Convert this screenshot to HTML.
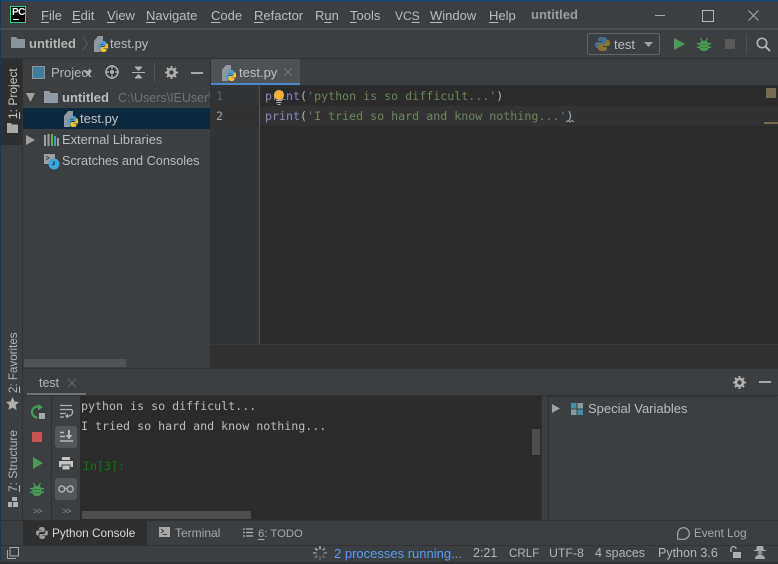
<!DOCTYPE html>
<html><head><meta charset="utf-8"><style>
html,body{margin:0;padding:0;background:#3c3f41}
#r{position:relative;width:778px;height:564px;overflow:hidden;background:#3c3f41;font-family:"Liberation Sans",sans-serif;font-size:13px;color:#bbbbbb}
.b{position:absolute}
.t{position:absolute;white-space:pre;line-height:16px}
.m{position:absolute;white-space:pre;font-family:"DejaVu Sans Mono",monospace;font-size:11.65px;line-height:16px}
svg{position:absolute;overflow:visible}
u{text-decoration:underline;text-underline-offset:2px}
.v{position:absolute;white-space:pre;transform-origin:0 0;transform:rotate(-90deg);line-height:14px;font-size:12px}
</style></head><body><div id="r">
<!-- edges -->
<div class="b" style="left:0;top:0;width:778px;height:1px;background:#0b4a8c"></div>
<div class="b" style="left:0;top:0;width:1px;height:564px;background:#16375a"></div>

<!-- title bar -->
<div class="b" style="left:10px;top:6px;width:16px;height:17px;background:#000;border:1px solid #21d789;box-sizing:border-box"></div>
<div class="t" style="left:12px;top:7px;font-size:10px;font-weight:bold;color:#fff;line-height:12px;letter-spacing:-.5px">PC</div>
<div class="b" style="left:13px;top:19px;width:6px;height:1px;background:#fff"></div>
<div class="t" style="left:41px;top:8px"><u>F</u>ile</div>
<div class="t" style="left:72px;top:8px"><u>E</u>dit</div>
<div class="t" style="left:107px;top:8px"><u>V</u>iew</div>
<div class="t" style="left:146px;top:8px"><u>N</u>avigate</div>
<div class="t" style="left:211px;top:8px"><u>C</u>ode</div>
<div class="t" style="left:254px;top:8px"><u>R</u>efactor</div>
<div class="t" style="left:315px;top:8px">R<u>u</u>n</div>
<div class="t" style="left:350px;top:8px"><u>T</u>ools</div>
<div class="t" style="left:395px;top:8px;font-size:12px">VC<u>S</u></div>
<div class="t" style="left:430px;top:8px"><u>W</u>indow</div>
<div class="t" style="left:489px;top:8px"><u>H</u>elp</div>
<div class="t" style="left:531px;top:7px;font-weight:bold;color:#9a9da0">untitled</div>
<div class="b" style="left:655px;top:15px;width:10px;height:1px;background:#a8a8a8"></div>
<div class="b" style="left:702px;top:10px;width:10px;height:10px;border:1px solid #b5b5b5"></div>
<svg style="left:748px;top:10px" width="11" height="11"><path d="M.5.5l10 10M10.500.5l-10 10" stroke="#a8a8a8" fill="none"/></svg>
<div class="b" style="left:0;top:28px;width:778px;height:2px;background:#4b4e50"></div>

<!-- nav bar -->
<svg style="left:11px;top:37px" width="14" height="11"><path d="M0 0h5l2 2h7v9H0z" fill="#8a9299"/></svg>
<div class="t" style="left:29px;top:36px;font-weight:bold;color:#b4b4b4">untitled</div>
<svg style="left:82px;top:36px" width="6" height="16"><path d="M.5.500l5 7-5 7" stroke="#5c5f61" fill="none"/></svg>
<svg style="left:94px;top:36px" width="14" height="16"><use href="#py"/></svg>
<div class="t" style="left:110px;top:36px">test.py</div>

<div class="b" style="left:587px;top:33px;width:73px;height:22px;border:1px solid #646464;border-radius:3px;box-sizing:border-box"></div>
<svg style="left:595px;top:36px" width="15" height="16"><path d="M7 1c-3 0-4 1-4 3v1h4v1H2C0 6 0 8 0 9c0 2 1 3 2 3h2v-2c0-1 1-2 3-2h3c1 0 2-1 2-2V3c0-1-2-2-5-2z" fill="#3f6f93"/><path d="M8 15c3 0 4-1 4-3v-1H8v-1h5c2 0 2-2 2-3 0-2-1-3-2-3h-2v2c0 1-1 2-3 2H5c-1 0-2 1-2 2v3c0 1 2 2 5 2z" fill="#8a7530"/></svg>
<div class="t" style="left:614px;top:37px">test</div>
<svg style="left:644px;top:42px" width="9" height="5"><path d="M0 0h9L4.500 5z" fill="#a0a0a0"/></svg>
<svg style="left:674px;top:38px" width="11" height="12"><path d="M0 0l11 6-11 6z" fill="#499c54"/></svg>
<svg style="left:697px;top:37px" width="14" height="14"><use href="#bug"/></svg>
<div class="b" style="left:725px;top:39px;width:10px;height:10px;background:#5a5a5a"></div>
<div class="b" style="left:746px;top:34px;width:1px;height:20px;background:#4f5254"></div>
<svg style="left:756px;top:37px" width="15" height="15"><circle cx="6" cy="6" r="4.700" fill="none" stroke="#b0b0b0" stroke-width="1.700"/><path d="M9.500 9.500l4.500 4.500" stroke="#b0b0b0" stroke-width="2"/></svg>
<div class="b" style="left:0;top:58px;width:778px;height:1px;background:#323232"></div>

<!-- left strip -->
<div class="b" style="left:1px;top:59px;width:21px;height:86px;background:#2c2e30"></div>
<div class="b" style="left:22px;top:59px;width:1px;height:461px;background:#323232"></div>
<div class="v" style="left:6px;top:119px;color:#c8c8c8"><u>1</u>: Project</div>
<svg style="left:7px;top:123px" width="11" height="10"><path d="M0 0h4l1 1.500h6V10H0z" fill="#a9a9a9"/></svg>
<div class="v" style="left:7px;top:393px;color:#b4b4b4;font-size:11.600px"><u>2</u>: Favorites</div>
<svg style="left:6px;top:397px" width="13" height="13"><path d="M6.500 0l2 4.500 4.500.500-3.400 3 1 5-4.100-2.500-4.100 2.500 1-5L0 5l4.500-.500z" fill="#b0b0b0"/></svg>
<div class="v" style="left:6px;top:492px;color:#b4b4b4"><u>7</u>: Structure</div>
<svg style="left:8px;top:497px" width="10" height="10"><path d="M4 0h5v4H4zM0 5h4v5H0zM5 5h5v5H5z" fill="#b0b0b0"/></svg>

<!-- project header -->
<div class="b" style="left:32px;top:66px;width:13px;height:13px;border:1px solid #909599;background:#3e7f9e;box-sizing:border-box"></div>
<div class="t" style="left:51px;top:65px;color:#b4b4b4">Project</div>
<svg style="left:84px;top:71px" width="8" height="5"><path d="M0 0h8L4 5z" fill="#a8a8a8"/></svg>
<svg style="left:105px;top:65px" width="14" height="14"><circle cx="7" cy="7" r="6" fill="none" stroke="#b0b0b0" stroke-width="1.400"/><circle cx="7" cy="7" r="2" fill="#b0b0b0"/><path d="M7 0v4M7 10v4M0 7h4M10 7h4" stroke="#b0b0b0" stroke-width="1.400"/></svg>
<svg style="left:132px;top:66px" width="13" height="13"><path d="M0 6.500h13" stroke="#b0b0b0"/><path d="M6.500 5L3 1.500h7zM6.500 8L3 11.500h7z" fill="#b0b0b0"/><path d="M3 1h7M3 12h7" stroke="#b0b0b0"/></svg>
<div class="b" style="left:154px;top:62px;width:1px;height:20px;background:#515456"></div>
<svg style="left:165px;top:66px" width="13" height="13"><use href="#gear"/></svg>
<div class="b" style="left:191px;top:72px;width:12px;height:2px;background:#a8a8a8"></div>

<!-- tree -->
<svg style="left:26px;top:93px" width="10" height="9"><path d="M0 0h9L4.500 9z" fill="#a0a0a0"/></svg>
<svg style="left:44px;top:91px" width="14" height="12"><path d="M0 0h5l2 2h7v10H0z" fill="#8e9aa5"/></svg>
<div class="t" style="left:62px;top:90px;font-weight:bold;color:#bcbcbc">untitled</div>
<div class="t" style="left:118px;top:90px;color:#6e7072;font-size:12.500px;width:92px;overflow:hidden">C:\Users\IEUser\</div>
<div class="b" style="left:23px;top:108px;width:187px;height:21px;background:#0d293e"></div>
<svg style="left:64px;top:111px" width="14" height="16"><use href="#py"/></svg>
<div class="t" style="left:80px;top:111px;color:#c4c4c4">test.py</div>
<svg style="left:26px;top:135px" width="9" height="10"><path d="M0 0l9 5-9 5z" fill="#a0a0a0"/></svg>
<svg style="left:44px;top:134px" width="15" height="12"><rect x="0" y="1" width="2" height="11" fill="#9aa0a5"/><rect x="3.500" y="0" width="2" height="12" fill="#9aa0a5"/><rect x="7" y="0" width="2" height="12" fill="#62b543"/><rect x="10" y="2" width="2" height="10" fill="#40a0d0"/><rect x="13" y="4" width="2" height="8" fill="#9aa0a5"/></svg>
<div class="t" style="left:62px;top:132px;font-size:12.900px">External Libraries</div>
<svg style="left:44px;top:154px" width="16" height="16"><rect x="0" y="0" width="11" height="10" fill="#9aa0a5"/><path d="M2 2l3 2-3 2" stroke="#3c3f41" fill="none"/><circle cx="10" cy="10" r="5.500" fill="#3ba6de"/><path d="M10 7v3.500H8" stroke="#2a3f50" fill="none" stroke-width="1.200"/></svg>
<div class="t" style="left:62px;top:153px;font-size:12.700px">Scratches and Consoles</div>
<div class="b" style="left:24px;top:359px;width:102px;height:8px;background:#505253"></div>
<div class="b" style="left:126px;top:359px;width:84px;height:8px;background:#3c3f41"></div>

<!-- editor -->
<div class="b" style="left:210px;top:59px;width:1px;height:310px;background:#323232"></div>
<div class="b" style="left:211px;top:59px;width:89px;height:24px;background:#4e5254"></div>
<div class="b" style="left:211px;top:83px;width:89px;height:3px;background:#4a88c7"></div>
<svg style="left:222px;top:65px" width="14" height="16"><use href="#py"/></svg>
<div class="t" style="left:239px;top:65px;color:#c0c0c0">test.py</div>
<svg style="left:284px;top:68px" width="8" height="8"><path d="M0 0l8 8M8 0l-8 8" stroke="#6f7274"/></svg>
<div class="b" style="left:211px;top:85px;width:567px;height:1px;background:#323232"></div>
<div class="b" style="left:211px;top:86px;width:48px;height:259px;background:#313335"></div>
<div class="b" style="left:259px;top:86px;width:1px;height:259px;background:#555555"></div>
<div class="b" style="left:260px;top:86px;width:518px;height:259px;background:#2b2b2b"></div>
<div class="b" style="left:211px;top:106px;width:48px;height:20px;background:#323232"></div>
<div class="b" style="left:260px;top:106px;width:518px;height:20px;background:#323232"></div>
<div class="m" style="left:216px;top:88px;color:#606366">1</div>
<div class="m" style="left:216px;top:108px;color:#a4a3a3">2</div>
<div class="m" style="left:265px;top:88px;color:#6a8759"><span style="color:#8888c6">print</span><span style="color:#a9b7c6">(</span>'python is so difficult...'<span style="color:#a9b7c6">)</span></div>
<div class="m" style="left:265px;top:108px;color:#6a8759"><span style="color:#8888c6">print</span><span style="color:#a9b7c6">(</span>'I tried so hard and know nothing...'<span style="color:#a9b7c6">)</span></div>
<svg style="left:566px;top:120px" width="8" height="3"><path d="M0 2l2-1.500 2 1.500 2-1.500 2 1.500" stroke="#a0a0a0" fill="none"/></svg>
<svg style="left:273px;top:90px" width="13" height="15"><circle cx="6" cy="5" r="5" fill="#f4af3d"/><path d="M3 10.500h6M3.500 12.500h5M4.500 14.500h3" stroke="#b0b0b0"/></svg>
<div class="b" style="left:766px;top:88px;width:10px;height:10px;background:#7a6c52"></div>
<div class="b" style="left:764px;top:122px;width:14px;height:2px;background:#7a6c52"></div>

<!-- breadcrumb strip -->
<div class="b" style="left:211px;top:344px;width:567px;height:1px;background:#3b3b3b"></div>
<div class="b" style="left:211px;top:345px;width:567px;height:23px;background:#313131"></div>
<div class="b" style="left:23px;top:368px;width:755px;height:1px;background:#323232"></div>

<!-- run panel header -->
<div class="t" style="left:39px;top:375px;font-size:12.500px;color:#aeb6bd">test</div>
<svg style="left:68px;top:379px" width="8" height="8"><path d="M0 0l8 8M8 0l-8 8" stroke="#65686a"/></svg>
<div class="b" style="left:27px;top:393px;width:59px;height:3px;background:#6d7276"></div>
<div class="b" style="left:23px;top:395px;width:755px;height:1px;background:#323232"></div>
<svg style="left:733px;top:376px" width="13" height="13"><use href="#gear"/></svg>
<div class="b" style="left:759px;top:381px;width:12px;height:2px;background:#a8a8a8"></div>

<!-- run toolbars -->
<div class="b" style="left:51px;top:396px;width:1px;height:124px;background:#323232"></div>
<svg style="left:30px;top:404px" width="16" height="16"><path d="M9 2.500H7.500a5.500 5.500 0 1 0 0 11" fill="none" stroke="#499c54" stroke-width="2.200"/><path d="M8 0l5 3-5 3.500z" fill="#499c54"/><rect x="9" y="9" width="6" height="6" fill="#a8a8a8"/></svg>
<div class="b" style="left:32px;top:432px;width:10px;height:10px;background:#c75450"></div>
<svg style="left:33px;top:457px" width="10" height="12"><path d="M0 0l10 6-10 6z" fill="#499c54"/></svg>
<svg style="left:30px;top:482px" width="14" height="14"><use href="#bug"/></svg>
<div class="t" style="left:33px;top:503px;font-size:9px;color:#8c8c8c;letter-spacing:-1px">&gt;&gt;</div>
<div class="b" style="left:55px;top:426px;width:22px;height:22px;background:#53575a;border-radius:3px"></div>
<div class="b" style="left:55px;top:478px;width:22px;height:22px;background:#53575a;border-radius:3px"></div>
<svg style="left:60px;top:405px" width="13" height="14"><path d="M0 .500h12M0 4.500h12M0 8.500h6M0 12h4" stroke="#b0b0b0" stroke-width="1.300" fill="none"/><path d="M12 4.500c1 2 1 6-3 6.500H7" stroke="#b0b0b0" stroke-width="1.300" fill="none"/><path d="M8 8.500l-3 2.500 3 2.500z" fill="#b0b0b0"/></svg>
<svg style="left:60px;top:430px" width="13" height="13"><path d="M0 2.500h4M0 6.500h5M0 11h13" stroke="#b8b8b8" stroke-width="1.500"/><path d="M9 0v6" stroke="#b8b8b8" stroke-width="2"/><path d="M5.500 5h7L9 9.500z" fill="#b8b8b8"/></svg>
<svg style="left:59px;top:457px" width="14" height="13"><rect x="3" y="0" width="8" height="3" fill="#c4c4c4"/><rect x="0" y="4" width="14" height="6" fill="#c4c4c4"/><rect x="3" y="8" width="8" height="5" fill="#c4c4c4" stroke="#3c3f41"/></svg>
<svg style="left:58px;top:485px" width="16" height="8"><circle cx="3.800" cy="4" r="3" fill="none" stroke="#b0b0b0" stroke-width="1.400"/><circle cx="12.200" cy="4" r="3" fill="none" stroke="#b0b0b0" stroke-width="1.400"/><path d="M6.800 3.500h2.400" stroke="#b0b0b0" stroke-width="1.400"/></svg>
<div class="t" style="left:62px;top:503px;font-size:9px;color:#8c8c8c;letter-spacing:-1px">&gt;&gt;</div>

<!-- console -->
<div class="b" style="left:80px;top:396px;width:462px;height:124px;background:#2b2b2b"></div>
<div class="m" style="left:81px;top:398px;color:#bbbbbb">python is so difficult...</div>
<div class="m" style="left:81px;top:418px;color:#bbbbbb">I tried so hard and know nothing...</div>
<div class="m" style="left:83px;top:458px;color:#0b7a0b">In[3]:</div>
<div class="b" style="left:82px;top:511px;width:169px;height:8px;background:#4d4d4d"></div>
<div class="b" style="left:532px;top:429px;width:8px;height:26px;background:#4d4d4d"></div>

<!-- variables -->
<div class="b" style="left:541px;top:396px;width:1px;height:124px;background:#323232"></div>
<div class="b" style="left:548px;top:396px;width:1px;height:124px;background:#323232"></div>
<div class="b" style="left:549px;top:396px;width:228px;height:1px;background:#323232"></div>
<svg style="left:552px;top:404px" width="9" height="9"><path d="M0 0l8 4.500L0 9z" fill="#a0a0a0"/></svg>
<svg style="left:571px;top:403px" width="12" height="12"><path d="M0 0h5.500v5.500H0z" fill="#3f8fb0"/><path d="M6.500 0H12v5.500H6.500z" fill="#8e989f"/><path d="M0 6.500h5.500V12H0z" fill="#8e989f"/><path d="M6.500 6.500H12V12H6.500z" fill="#3f8fb0"/></svg>
<div class="t" style="left:588px;top:401px">Special Variables</div>

<!-- bottom tabs -->
<div class="b" style="left:0;top:520px;width:778px;height:1px;background:#323232"></div>
<div class="b" style="left:23px;top:521px;width:124px;height:24px;background:#2d2f31"></div>
<svg style="left:36px;top:527px" width="12" height="12"><path d="M6 0C3.500 0 3 1 3 2v1h3v.500H2C.500 3.500 0 4.500 0 6s.500 2.500 2 2.500h.700V7c0-1 1-2 2-2h2.500c1 0 1.500-.700 1.500-1.500V2C8.700 1 8 0 6 0z" fill="#9a9a9a"/><path d="M6 12c2.500 0 3-1 3-2V9H6v-.500h4c1.500 0 2-1 2-2.500s-.500-2.500-2-2.500h-.700V5c0 1-1 2-2 2H4.800c-1 0-1.500.700-1.500 1.500V10c0 1 .700 2 2.700 2z" fill="#9a9a9a"/></svg>
<div class="t" style="left:52px;top:525px;font-size:11.800px;color:#d8d8d8">Python Console</div>
<div class="b" style="left:159px;top:527px;width:11px;height:10px;background:#a8a8a8"></div>
<svg style="left:160px;top:528px" width="9" height="8"><path d="M1 1l2.500 2L1 5M3 6.500h4" stroke="#3c3f41" fill="none"/></svg>
<div class="t" style="left:175px;top:525px;font-size:12px;color:#a8a8a8">Terminal</div>
<svg style="left:243px;top:528px" width="10" height="9"><path d="M0 1h2M3 1h7M0 4.500h2M3 4.500h7M0 8h2M3 8h7" stroke="#b0b0b0" stroke-width="1.300"/></svg>
<div class="t" style="left:258px;top:526px;font-size:11.300px;color:#a8a8a8"><u>6</u>: TODO</div>
<svg style="left:677px;top:527px" width="13" height="13"><path d="M6.500.700a5.800 5.800 0 1 1 0 11.600H1.200A1 1 0 0 1 .700 11.500V6.500A5.800 5.800 0 0 1 6.500.700z" fill="none" stroke="#a8a8a8" stroke-width="1.200"/></svg>
<div class="t" style="left:694px;top:526px;font-size:11.700px;color:#a8a8a8">Event Log</div>
<div class="b" style="left:0;top:545px;width:778px;height:1px;background:#323232"></div>

<!-- status bar -->
<svg style="left:7px;top:547px" width="12" height="12"><rect x="3" y=".500" width="8.500" height="8.500" fill="none" stroke="#a8a8a8"/><path d="M.500 3v8.500H9" fill="none" stroke="#a8a8a8"/></svg>
<svg style="left:313px;top:546px" width="14" height="14"><g stroke-width="1.800"><path d="M7 0v3.500" stroke="#9a9a9a"/><path d="M11.900 2.100l-2.400 2.400" stroke="#8a8a8a"/><path d="M14 7h-3.500" stroke="#7a7a7a"/><path d="M11.900 11.900l-2.400-2.400" stroke="#6a6a6a"/><path d="M7 14v-3.500" stroke="#666"/><path d="M2.100 11.900l2.400-2.400" stroke="#777"/><path d="M0 7h3.500" stroke="#888"/><path d="M2.100 2.100l2.400 2.400" stroke="#a0a0a0"/></g></svg>
<div class="t" style="left:334px;top:546px;color:#589df6">2 processes running...</div>
<div class="t" style="left:473px;top:545px;font-size:12.500px;color:#b4b4b4">2:21</div>
<div class="t" style="left:509px;top:546px;font-size:11.600px;color:#b4b4b4">CRLF</div>
<div class="t" style="left:549px;top:545px;font-size:12.300px;color:#b4b4b4">UTF-8</div>
<div class="t" style="left:595px;top:545px;font-size:12.500px;color:#b4b4b4">4 spaces</div>
<div class="t" style="left:658px;top:545px;font-size:12.500px;color:#b4b4b4">Python 3.6</div>
<svg style="left:729px;top:546px" width="12" height="13"><path d="M2 6V3a2.500 2.500 0 0 1 5 0" fill="none" stroke="#b0b0b0" stroke-width="1.300"/><rect x="4" y="6" width="8" height="6" fill="#b0b0b0"/></svg>
<svg style="left:754px;top:546px" width="12" height="13"><path d="M3 0h6l1 4h2v1H0V4h2z" fill="#a8a8a8"/><circle cx="6" cy="7" r="2.500" fill="#8c8c8c"/><path d="M1 13c0-3 2-4 5-4s5 1 5 4z" fill="#a8a8a8"/></svg>
<div class="b" style="left:0;top:562px;width:778px;height:2px;background:#2f3133"></div>

<svg width="0" height="0" style="position:absolute"><defs>
<g id="py"><path d="M0 5l4-5h5v8H6v8H0z" fill="#8e989f"/><path d="M9.500 5C7 5 6.500 6 6.500 7v1h3v.500h-4C4 8.500 3.500 9.500 3.500 11s.500 2.500 2 2.500h.700V12c0-1 1-2 2-2h2.500c1 0 1.500-.700 1.500-1.500V7c0-1-.700-2-2.700-2z" fill="#4b9ad4"/><path d="M9.500 16c2.500 0 3-1 3-2v-1h-3v-.500h4c1.500 0 .500-1 .500-2.500s0-2.500-1.500-2.500h-.700V9c0 1-1 2-2 2H7.800c-1 0-1.500.700-1.500 1.500V14c0 1 .700 2 3.200 2z" fill="#f0c23b"/></g>
<g id="bug" fill="#499c54"><rect x="2.500" y="4" width="9" height="10" rx="3.500"/><path d="M4 .500l1.800 3.500h2.400L10 .500l1 .600L9.500 4.500h-5L3 1.100zM0 6h3v1.500H0zM11 6h3v1.500h-3zM0 9.500h3V11H0zM11 9.500h3V11h-3z"/><path d="M3.500 7.500h7M3.500 10.500h7" stroke="#3c3f41" stroke-width=".700" opacity=".6"/></g>
<g id="gear"><circle cx="6.500" cy="6.500" r="3.500" fill="none" stroke="#b0b0b0" stroke-width="2.600"/><path d="M6.500 0v13M0 6.500h13M1.900 1.900l9.200 9.200M11.100 1.900l-9.200 9.200" stroke="#b0b0b0" stroke-width="2" stroke-dasharray="2.200 8.600 2.200"/></g>
</defs></svg>
</div></body></html>
